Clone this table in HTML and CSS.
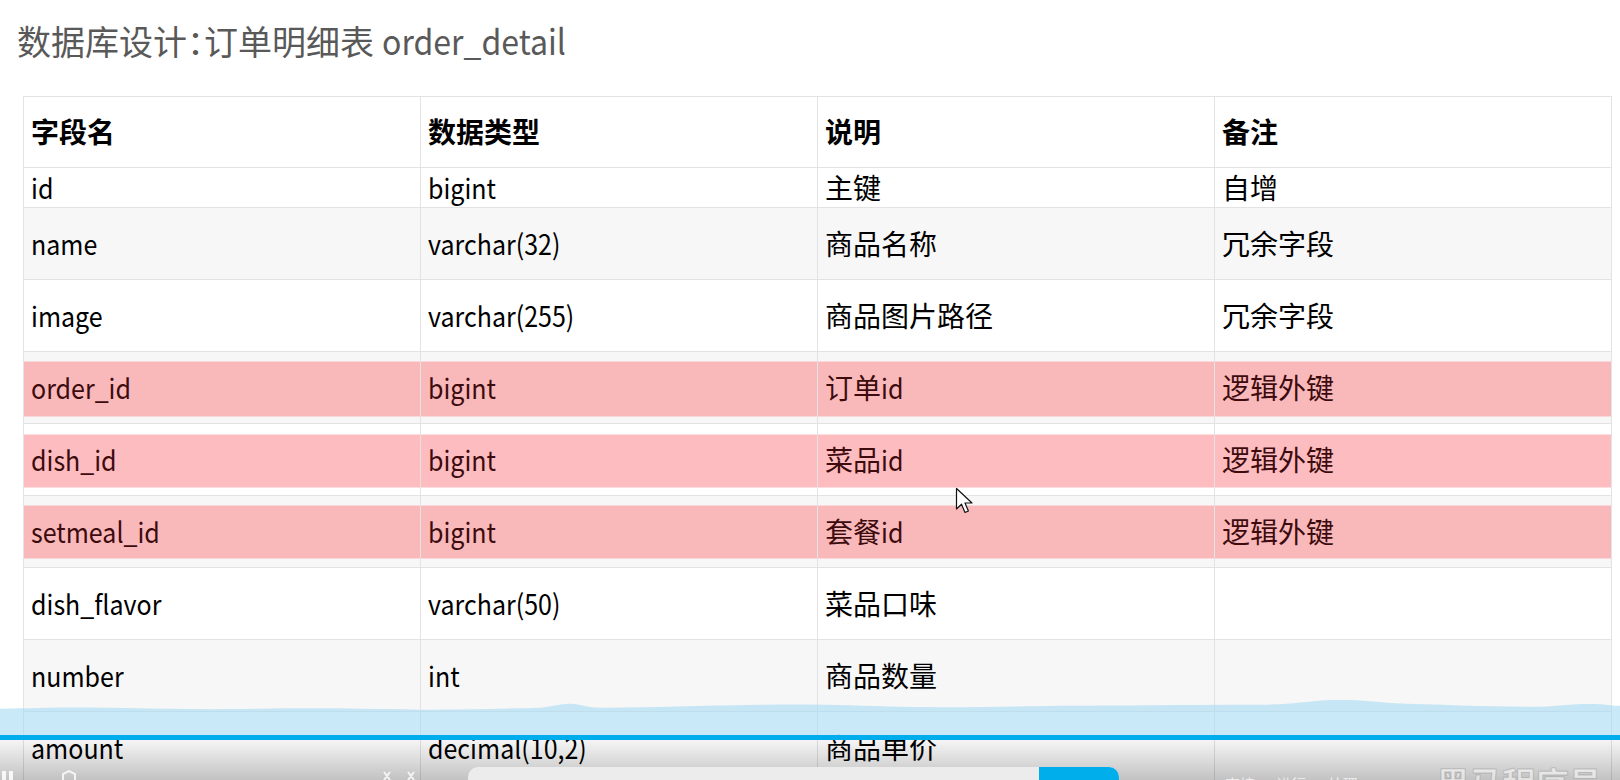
FILE: index.html
```html
<!DOCTYPE html>
<html lang="zh">
<head>
<meta charset="utf-8">
<title>订单明细表 order_detail</title>
<link rel="stylesheet" href="styles.css">
</head>
<body>
<main class="slide">
  <h1 class="title">数据库设计：订单明细表 <span class="lat">order_detail</span></h1>
  <table class="schema">
    <colgroup><col><col><col><col></colgroup>
    <thead>
      <tr><th>字段名</th><th>数据类型</th><th>说明</th><th>备注</th></tr>
    </thead>
    <tbody>
      <tr class="short"><td><span class="lat">id</span></td><td><span class="lat">bigint</span></td><td>主键</td><td>自增</td></tr>
      <tr><td><span class="lat">name</span></td><td><span class="lat">varchar(32)</span></td><td>商品名称</td><td>冗余字段</td></tr>
      <tr><td><span class="lat">image</span></td><td><span class="lat">varchar(255)</span></td><td>商品图片路径</td><td>冗余字段</td></tr>
      <tr class="mark mark-a"><td><span class="lat">order_id</span></td><td><span class="lat">bigint</span></td><td>订单<span class="lat">id</span></td><td>逻辑外键</td></tr>
      <tr class="mark mark-b"><td><span class="lat">dish_id</span></td><td><span class="lat">bigint</span></td><td>菜品<span class="lat">id</span></td><td>逻辑外键</td></tr>
      <tr class="mark mark-c"><td><span class="lat">setmeal_id</span></td><td><span class="lat">bigint</span></td><td>套餐<span class="lat">id</span></td><td>逻辑外键</td></tr>
      <tr><td><span class="lat">dish_flavor</span></td><td><span class="lat">varchar(50)</span></td><td>菜品口味</td><td></td></tr>
      <tr><td><span class="lat">number</span></td><td><span class="lat">int</span></td><td>商品数量</td><td></td></tr>
      <tr><td><span class="lat">amount</span></td><td><span class="lat">decimal(10,2)</span></td><td>商品单价</td><td></td></tr>
    </tbody>
  </table>
</main>

<svg class="cursor" width="22" height="30" viewBox="0 0 22 30" aria-hidden="true">
  <path d="M1.5 1.5 L1.5 22 L6.5 17.2 L10 25.5 L13.4 24 L10 16 L17 16 Z" fill="#fff" stroke="#111" stroke-width="1.2" stroke-linejoin="round"/>
</svg>

<div class="player" aria-hidden="true">
  <svg class="wave" viewBox="0 0 1620 36" preserveAspectRatio="none">
    <path d="M0 9 C40 8 70 7 110 8 C160 9 200 10 260 9 C320 8 360 9 420 10 C470 10 500 9 540 8 C555 6 565 3 575 4 C585 6 590 8 610 8 C650 8 700 6 760 5 C820 4 860 6 900 7 C960 8 1000 7 1060 6 C1120 6 1180 5 1250 5 C1290 5 1300 2 1330 0 C1350 -1 1365 1 1390 3 C1440 5 1500 7 1540 7 C1560 6 1570 4 1590 4 C1605 4 1612 6 1620 6 L1620 36 L0 36 Z"/>
  </svg>
  <div class="bar"></div>
  <div class="shade">
    <div class="controls">
      <span class="pause"></span>
      <svg class="ctl c1" width="14" height="12" viewBox="0 0 14 12"><path d="M1 12 L1 4 L7 1 L13 4 L13 12" fill="none" stroke="rgba(255,255,255,0.8)" stroke-width="2"/></svg>
      <svg class="ctl c2" width="40" height="12" viewBox="0 0 40 12"><path d="M2 2 L8 10 M8 2 L2 10 M26 2 L32 10 M32 2 L26 10" stroke="rgba(255,255,255,0.8)" stroke-width="2"/></svg>
      <div class="danmaku"><span class="send"></span></div>
      <span class="hint">直接 进行 处理</span>
      <span class="mark-logo">黑马程序员</span>
    </div>
  </div>
</div>
</body>
</html>
```

FILE: styles.css
```css
html, body {
  margin: 0;
  padding: 0;
  background: #ffffff;
}

body {
  width: 1620px;
  height: 780px;
  overflow: hidden;
  font-family: "Noto Sans CJK SC", "Noto Sans", sans-serif;
  color: #000;
}

.slide {
  display: flex;
  flex-direction: column;
  padding: 22px 0 0 0;
}

.title {
  margin: 0 0 38px 17px;
  font-size: 34px;
  line-height: 35px;
  font-weight: 400;
  color: #595959;
  white-space: nowrap;
  font-feature-settings: "palt";
}

.title .lat {
  display: inline-block;
  font-size: 35px;
  transform: scaleX(0.915);
  transform-origin: left center;
}

.schema {
  margin-left: 23px;
  width: 1589px;
  table-layout: fixed;
  border-collapse: collapse;
  font-size: 28px;
  line-height: 1.2;
}

.schema col {
  width: 25%;
}

.schema th,
.schema td {
  border: 1px solid #e3e3e3;
  padding: 0 7px;
  text-align: left;
  vertical-align: middle;
  white-space: nowrap;
}

.schema .lat {
  display: inline-block;
  font-size: 28px;
  transform: scaleX(0.893);
  transform-origin: left center;
}

.schema th {
  font-weight: 700;
  height: 70px;
  background: #fff;
}

.schema tbody tr {
  height: 72px;
  background: #fff;
}

.schema tbody tr:nth-child(even) {
  background: #f7f7f7;
}

.schema tbody tr.short {
  height: 40px;
}

.schema tr.mark td {
  color: #3d0b0e;
}

.schema tr.mark-a td {
  background: linear-gradient(to bottom,
    transparent 9px, #f9b9ba 9px,
    #f9b9ba calc(100% - 7px), transparent calc(100% - 7px));
}

.schema tr.mark-b td {
  background: linear-gradient(to bottom,
    transparent 10px, #fdbcbf 10px,
    #fdbcbf calc(100% - 8px), transparent calc(100% - 8px));
}

.schema tr.mark-c td {
  background: linear-gradient(to bottom,
    transparent 9px, #f9b9ba 9px,
    #f9b9ba calc(100% - 9px), transparent calc(100% - 9px));
}

.cursor {
  position: absolute;
  left: 955px;
  top: 487px;
}

/* video player overlay */
.player {
  position: absolute;
  left: 0;
  right: 0;
  bottom: 0;
  height: 80px;
  display: flex;
  flex-direction: column;
}

.wave {
  display: block;
  width: 1620px;
  height: 35px;
  fill: rgba(168, 220, 243, 0.62);
}

.bar {
  height: 5px;
  background: #00adec;
}

.shade {
  flex: 1;
  background: linear-gradient(to bottom, rgba(0,0,0,0.04), rgba(0,0,0,0.24));
  position: relative;
  overflow: hidden;
}

.controls {
  position: absolute;
  left: 0;
  right: 0;
  top: 27px;
  height: 40px;
}

.pause {
  position: absolute;
  left: 2px;
  top: 4px;
  width: 4px;
  height: 20px;
  background: rgba(255,255,255,0.85);
  box-shadow: 7px 0 0 rgba(255,255,255,0.85);
}

.ctl {
  position: absolute;
  top: 3px;
}

.c1 { left: 62px; }
.c2 { left: 382px; }

.danmaku {
  position: absolute;
  left: 468px;
  top: 0;
  width: 651px;
  height: 30px;
  border-radius: 10px;
  background: #ececec;
  overflow: hidden;
}

.send {
  position: absolute;
  right: 0;
  top: 0;
  width: 80px;
  height: 30px;
  background: #00aeec;
}

.hint {
  position: absolute;
  left: 1225px;
  top: 6px;
  font-size: 15px;
  color: rgba(255,255,255,0.7);
  word-spacing: 18px;
}

.mark-logo {
  position: absolute;
  left: 1436px;
  top: -2px;
  font-size: 34px;
  line-height: 36px;
  font-weight: 700;
  color: rgba(255,255,255,0.55);
  -webkit-text-stroke: 1px rgba(120,120,120,0.35);
  letter-spacing: -1px;
}
```
